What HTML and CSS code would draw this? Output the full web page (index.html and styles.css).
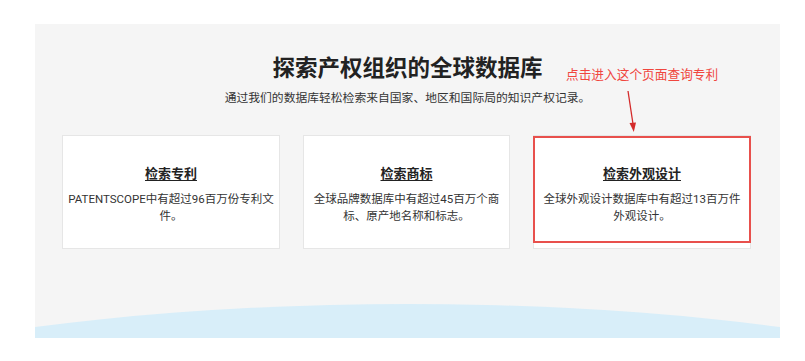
FILE: index.html
```html
<!DOCTYPE html>
<html lang="zh-CN">
<head>
  <meta charset="UTF-8">
  <title>探索产权组织的全球数据库</title>
  <link rel="stylesheet" href="styles.css">
</head>
<body>
<div class="panel">
  <!-- 标题 -->
  <div class="header">
    <h2 class="title">探索产权组织的全球数据库</h2>
    <p class="subtitle">通过我们的数据库轻松检索来自国家、地区和国际局的知识产权记录。</p>
  </div>

  <!-- 标注 -->
  <div class="note">点击进入这个页面查询专利</div>
  <svg class="note-arrow" width="14" height="44" viewBox="0 0 14 44">
    <line x1="3" y1="1" x2="8" y2="34" stroke="#d42a2a" stroke-width="1.3"/>
    <polygon points="4.5,33 11,32.5 8.8,42" fill="#d42a2a"/>
  </svg>

  <!-- 数据库卡片 -->
  <div class="cards">
    <a class="card" href="#">
      <span class="card-title">检索专利</span>
      <span class="card-text">PATENTSCOPE中有超过96百万份专利文件。</span>
    </a>
    <a class="card" href="#">
      <span class="card-title">检索商标</span>
      <span class="card-text">全球品牌数据库中有超过45百万个商标、原产地名称和标志。</span>
    </a>
    <a class="card marked" href="#">
      <span class="card-title">检索外观设计</span>
      <span class="card-text">全球外观设计数据库中有超过13百万件外观设计。</span>
    </a>
  </div>

  <div class="wave"></div>
</div>
</body>
</html>
```

FILE: styles.css
```css
body {
  margin: 0;
  background: #fff;
  font-family: Roboto, "Noto Sans CJK SC", sans-serif;
  color: #333;
}

/* 灰色区域 */
.panel {
  position: relative;
  margin: 24px 0 0 35px;
  width: 745px;
  height: 314px;
  background: #f5f5f5;
  display: flex;
  flex-direction: column;
}

.header {
  text-align: center;
  padding-top: 29px;
}

.title {
  margin: 0;
  font-size: 22.5px;
  line-height: 30px;
  font-weight: 700;
  color: #222;
}

.subtitle {
  margin: 6px 0 0;
  font-size: 11.8px;
  line-height: 18px;
  color: #333;
}

/* 红色标注 */
.note {
  position: absolute;
  left: 531px;
  top: 42px;
  font-size: 12.7px;
  line-height: 18px;
  color: #f0463e;
}

.note-arrow {
  position: absolute;
  left: 590px;
  top: 66px;
}

/* 卡片 */
.cards {
  display: grid;
  grid-template-columns: 218px 207px 218px;
  column-gap: 23px;
  margin: 28px 0 0 27px;
}

.card {
  position: relative;
  height: 114px;
  box-sizing: border-box;
  padding: 29px 5px 0;
  background: #fff;
  border: 1px solid #e6e6e6;
  text-align: center;
  text-decoration: none;
  color: #333;
}

.card-title {
  display: block;
  font-size: 13px;
  line-height: 18px;
  font-weight: 700;
  color: #222;
  text-decoration: underline;
  text-underline-offset: 2px;
}

.card-text {
  display: block;
  margin-top: 8px;
  font-size: 11.5px;
  line-height: 17px;
}

.marked::after {
  content: "";
  position: absolute;
  left: -1px;
  right: -1px;
  top: 0;
  bottom: 5px;
  border: 2px solid #e8504c;
}

/* 底部弧形 */
.wave {
  position: relative;
  margin-top: auto;
  height: 34px;
  overflow: hidden;
}

.wave::before {
  content: "";
  position: absolute;
  left: 50%;
  top: 0;
  width: 1600px;
  height: 400px;
  margin-left: -800px;
  border-radius: 50%;
  background: #d8eef9;
}
```
